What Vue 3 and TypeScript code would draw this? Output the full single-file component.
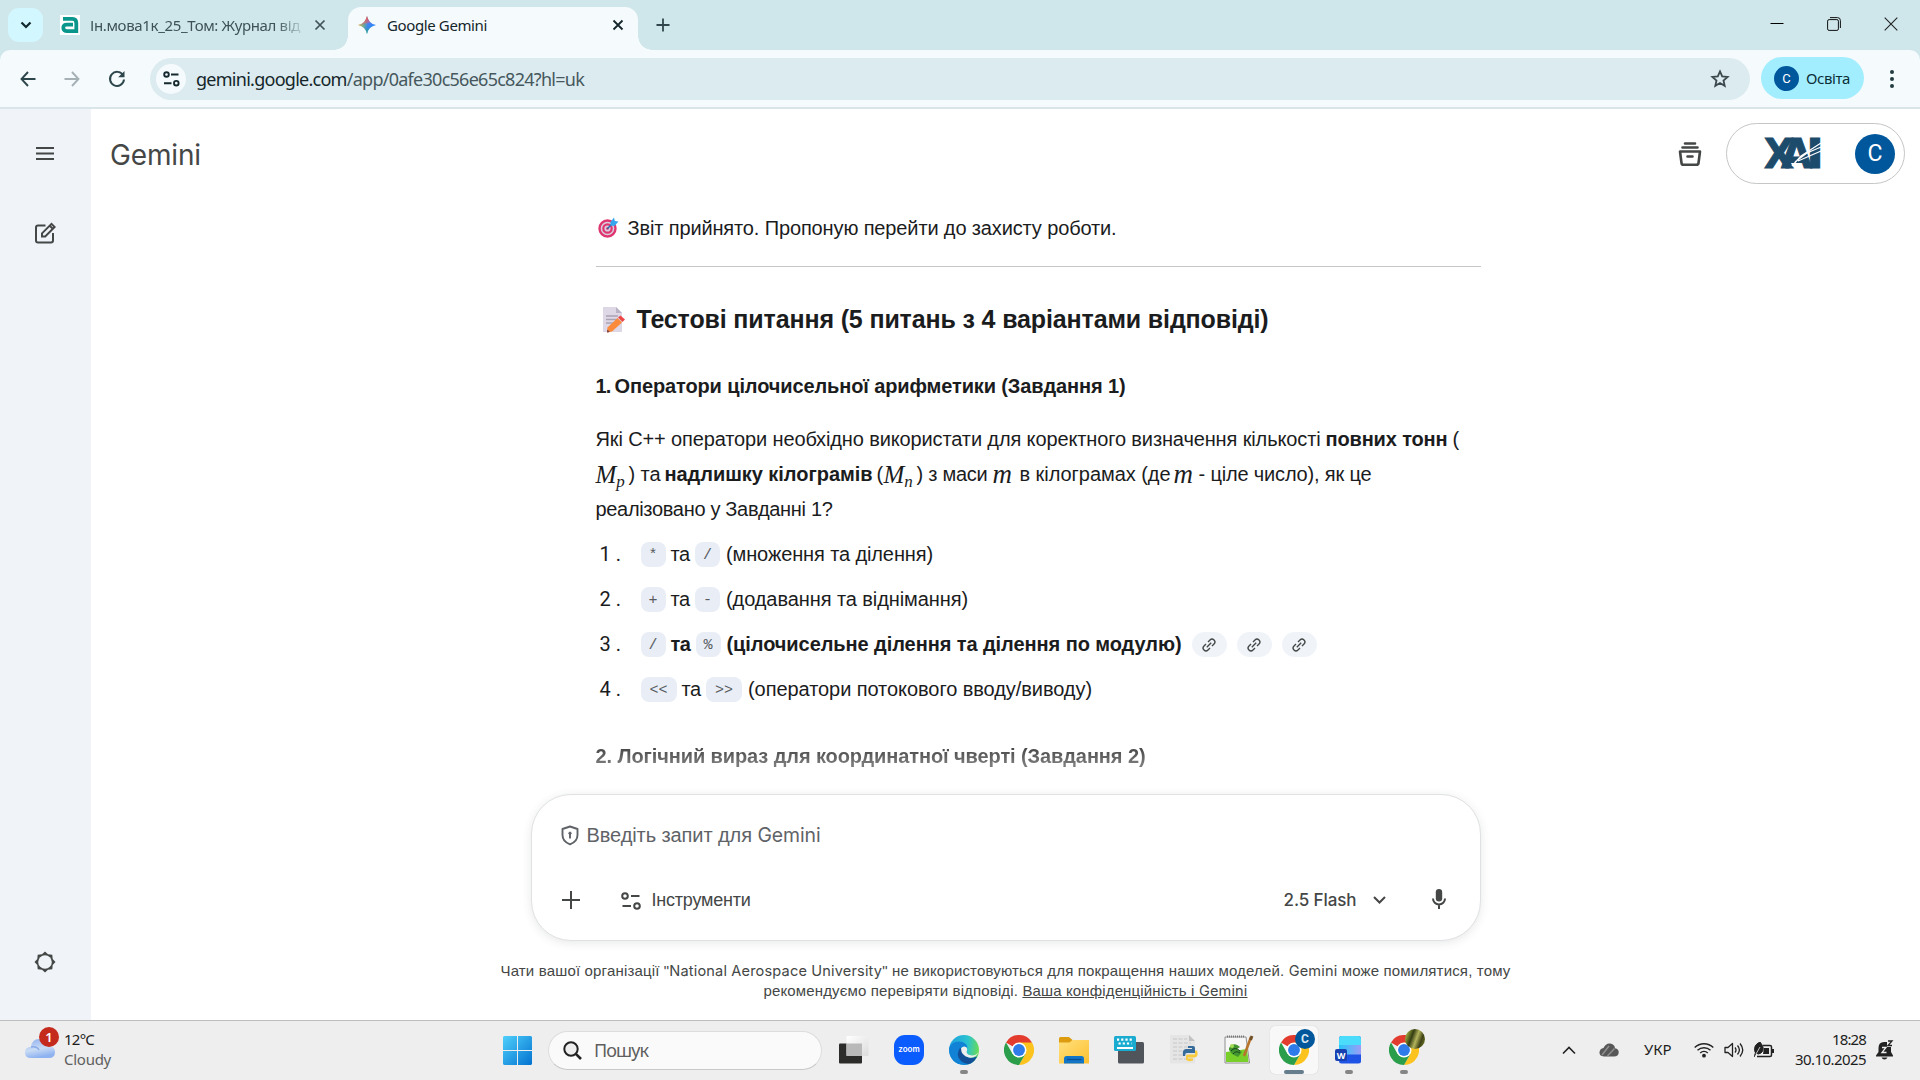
<script setup lang="ts">
import type { Directive } from 'vue'

interface Segment {
  text: string
  slot: number
  fit?: number
  kind?: 'bold' | 'math' | 'math single'
  sub?: string
}

interface Answer {
  first: string
  second: string
  wide?: boolean
  bold?: boolean
  text: string
  fit: number
  links: number
}

// Spreads a text run over the given width by adjusting its letter spacing.
const vFit: Directive<HTMLElement, number | undefined> = {
  mounted(el, { value }) {
    if (!value) return
    const count = (el.textContent ?? '').trim().length
    const natural = el.getBoundingClientRect().width
    el.style.letterSpacing = `${(value - natural) / count}px`
  },
}

const paragraph: Segment[][] = [
  [
    { text: 'Які C++ оператори необхідно використати для коректного визначення кількості', slot: 730, fit: 725 },
    { text: 'повних тонн', slot: 127, fit: 122, kind: 'bold' },
    { text: '(', slot: 10 },
  ],
  [
    { text: 'M', sub: 'p', slot: 33, kind: 'math' },
    { text: ') та', slot: 36, fit: 32 },
    { text: 'надлишку кілограмів', slot: 212, fit: 208, kind: 'bold' },
    { text: '(', slot: 7 },
    { text: 'M', sub: 'n', slot: 33, kind: 'math' },
    { text: ') з маси', slot: 76, fit: 71 },
    { text: 'm', slot: 27, kind: 'math single' },
    { text: 'в кілограмах (де', slot: 154, fit: 151 },
    { text: 'm', slot: 25, kind: 'math single' },
    { text: '- ціле число), як це', slot: 175, fit: 173 },
  ],
  [{ text: 'реалізовано у Завданні 1?', slot: 240, fit: 237 }],
]

const answers: Answer[] = [
  { first: '*', second: '/', text: '(множення та ділення)', fit: 207, links: 0 },
  { first: '+', second: '-', text: '(додавання та віднімання)', fit: 242, links: 0 },
  { first: '/', second: '%', bold: true, text: '(цілочисельне ділення та ділення по модулю)', fit: 455, links: 3 },
  { first: '<<', second: '>>', wide: true, text: '(оператори потокового вводу/виводу)', fit: 344, links: 0 },
]
</script>

<template>
  <div class="screen">
    <header class="tabs">
      <button class="tab-search">
        <svg width="12" height="8" viewBox="0 0 12 8"><path d="M1.5 1.5 6 6l4.500-4.500" fill="none" stroke="#10272c" stroke-width="2.200" /></svg>
      </button>
      <div class="tab idle">
        <svg class="fav" width="20" height="20" viewBox="0 0 20 20"><rect width="20" height="20" fill="#fff" /><path d="M3 3.800H12.500Q16.300 3.800 16.300 8V16.200H7.300Q3.300 16.200 3.300 12.800T7.300 9.600H13" fill="none" stroke="#0b968b" stroke-width="3.800" /></svg>
        <div class="tab-title faded"><span v-fit="210">Ін.мова1к_25_Том: Журнал від</span></div>
        <svg class="x" width="12" height="12" viewBox="0 0 12 12"><path d="M1.500 1.500l9 9m0-9l-9 9" stroke="#3e5257" stroke-width="1.700" /></svg>
      </div>
      <div class="tab active">
        <svg width="18" height="18" viewBox="0 0 18 18">
          <defs><linearGradient id="g1" x1="0" y1=".4" x2="1" y2=".6"><stop offset="0" stop-color="#f9c51a" /><stop offset=".38" stop-color="#5fa59f" /><stop offset=".55" stop-color="#3b82f6" /><stop offset="1" stop-color="#3186ff" /></linearGradient>
            <linearGradient id="g2" x1=".4" y1="0" x2=".6" y2="1"><stop offset="0" stop-color="#f43e44" /><stop offset=".36" stop-color="#ef5c70" stop-opacity=".6" /><stop offset=".5" stop-color="#4387f6" stop-opacity="0" /><stop offset=".75" stop-color="#24a96a" stop-opacity=".4" /><stop offset="1" stop-color="#0ebc5f" /></linearGradient></defs>
          <path d="M9 0Q10.500 7.500 18 9 10.500 10.500 9 18 7.500 10.500 0 9 7.500 7.500 9 0Z" fill="url(#g1)" />
          <path d="M9 0Q10.500 7.500 18 9 10.500 10.500 9 18 7.500 10.500 0 9 7.500 7.500 9 0Z" fill="url(#g2)" />
        </svg>
        <div class="tab-title"><span v-fit="100">Google Gemini</span></div>
        <svg class="x" width="12" height="12" viewBox="0 0 12 12"><path d="M1.500 1.500l9 9m0-9l-9 9" stroke="#14262a" stroke-width="1.800" /></svg>
      </div>
      <svg class="new-tab" width="14" height="14" viewBox="0 0 14 14"><path d="M7 .500v13M.500 7h13" stroke="#31474d" stroke-width="1.800" /></svg>
      <div class="window-controls">
        <svg width="14" height="14" viewBox="0 0 14 14"><path d="M.500 6.500h13" stroke="#000" /></svg>
        <svg width="14" height="14" viewBox="0 0 14 14" fill="none" stroke="#111"><rect x=".6" y="2.600" width="10.800" height="10.800" rx="1.500" /><path d="M3 .600h7.500q2.900 0 2.900 2.900V11" /></svg>
        <svg width="14" height="14" viewBox="0 0 14 14"><path d="M.700.700l12.600 12.600m0-12.600L.700 13.300" stroke="#222" stroke-width="1.100" /></svg>
      </div>
    </header>

    <div class="toolbar-back">
      <nav class="toolbar">
        <svg class="nav-icon" width="16" height="16" viewBox="0 0 16 16"><path d="M8 1 1.500 8 8 15M1.500 8H15.500" fill="none" stroke="#2d464c" stroke-width="1.900" /></svg>
        <svg class="nav-icon fwd" width="16" height="16" viewBox="0 0 16 16"><path d="M8 1 14.500 8 8 15M14.500 8H.500" fill="none" stroke="#a5b1b5" stroke-width="1.900" /></svg>
        <svg class="nav-icon rel" width="18" height="18" viewBox="0 0 18 18"><path d="M15 5.200A7 7 0 1 0 16 9.500" fill="none" stroke="#2d464c" stroke-width="2" /><path d="M16.500 1v6.300h-6.300z" fill="#2d464c" /></svg>
        <div class="omnibox">
          <span class="site">
            <svg width="17" height="16" viewBox="0 0 17 16" fill="none" stroke="#15292e" stroke-width="1.900"><circle cx="3.500" cy="3.500" r="2.300" /><circle cx="13.300" cy="12.200" r="2.300" /><path d="M8 3.500h7.500M1 12.200h7.500" /></svg>
          </span>
          <div class="url"><span v-fit="388">gemini.google.com<span class="path">/app/0afe30c56e65c824?hl=uk</span></span></div>
          <svg class="star" width="20" height="20" viewBox="0 0 20 20"><path d="M10 2.400l2.200 5 5.400.5-4.100 3.600 1.200 5.300L10 14l-4.700 2.800 1.200-5.300-4.100-3.600 5.400-.5z" fill="none" stroke="#3c494d" stroke-width="1.800" /></svg>
        </div>
        <div class="profile"><span class="mini-avatar">C</span><span v-fit="44">Освіта</span></div>
        <svg class="dots" width="4" height="18" viewBox="0 0 4 18" fill="#243b40"><circle cx="2" cy="2" r="2" /><circle cx="2" cy="9" r="2" /><circle cx="2" cy="16" r="2" /></svg>
      </nav>
    </div>

    <div class="body">
      <aside class="side">
        <svg width="18" height="14" viewBox="0 0 18 14"><path d="M0 1h18M0 6.500h18M0 12h18" stroke="#444746" stroke-width="2" /></svg>
        <svg class="edit" width="22" height="22" viewBox="0 0 22 22" fill="none" stroke="#444746" stroke-width="2"><path d="M11.500 3.500H4Q2 3.500 2 5.500V18.500Q2 20.500 4 20.500H17Q19 20.500 19 18.500V11" /><path d="M8 14.500V11.300L17.500 1.800 20.700 5 11.200 14.500Z" /><path d="M15.500 3.500 19 7" /></svg>
        <svg class="gear" width="22" height="22" viewBox="0 0 22 22"><path d="M11 .500 14 3.300 18.300 3.700 18.700 8 21.500 11 18.700 14 18.300 18.300 14 18.700 11 21.500 8 18.700 3.700 18.300 3.300 14 .500 11 3.300 8 3.700 3.700 8 3.300Z" fill="#444746" /><circle cx="11" cy="11" r="6.800" fill="#f0f4f9" /></svg>
      </aside>

      <main class="main">
        <div class="topbar">
          <div class="brand"><span v-fit="91">Gemini</span></div>
          <svg class="archive" width="24" height="24" viewBox="0 0 24 24" fill="none" stroke="#444746" stroke-width="2.600" stroke-linecap="round" stroke-linejoin="round"><path d="M7 1.500h10M4.500 5.500h15M2 9.500h20L20.500 21Q20.300 22.700 18.500 22.700H5.500Q3.700 22.700 3.500 21ZM9.500 14.500h5" /></svg>
          <div class="account">
            <svg class="uni" width="56" height="30" viewBox="0 0 56 30">
              <g font-family="DejaVu Sans" font-weight="700" font-size="41" fill="#1d4b6b" stroke="#1d4b6b">
                <text x="-1" y="30" textLength="30" lengthAdjust="spacingAndGlyphs">Х</text>
                <text x="16" y="30" textLength="31" lengthAdjust="spacingAndGlyphs">А</text>
                <text x="41" y="30" textLength="18" lengthAdjust="spacingAndGlyphs">І</text>
              </g>
              <path d="M27 28 36 18 56 5M30 24 42 15 56 9M33 23 56 13" fill="none" stroke="#fff" stroke-width="1.200" />
            </svg>
            <span class="avatar">C</span>
          </div>
        </div>

        <div class="chat">
          <article class="reply">
            <div class="line">
              <svg class="target" width="21" height="21" viewBox="0 0 21 21" fill="none"><circle cx="9.500" cy="11.500" r="8" fill="#d9cfe0" stroke="#e0366f" stroke-width="2.400" /><circle cx="9.500" cy="11.500" r="4.200" stroke="#e0366f" stroke-width="2.200" /><circle cx="9.500" cy="11.500" r="1.300" fill="#c92f66" /><path d="M9.500 11.500 14 7" stroke="#236fb5" stroke-width="1.400" /><path d="M12.500 5 16 .500 16.800 4 20.500 4.500 16.500 9 12.500 8.500Z" fill="#35a5ee" /></svg>
              <span v-fit="489">Звіт прийнято. Пропоную перейти до захисту роботи.</span>
            </div>
            <div class="rule"></div>
            <h2>
              <svg class="memo" width="24" height="26" viewBox="0 0 24 26"><path d="M1 0H14L20 6V25H1Z" fill="#ddd7e6" /><path d="M14 0V6H20Z" fill="#b9b1c4" /><path d="M4 9h12M4 12.500h11M4 16h8" stroke="#aaa3b3" stroke-width="1.300" /><path d="M5.500 20.500 15.500 11 20 15.500 10 24.500 5 25.500Z" fill="#fb8b3a" /><path d="M16 10.500 18.500 8.500 23 12.500 20.500 15Z" fill="#ec4848" /><path d="M5 25.500l.4-3 2.500 2.400z" fill="#73404a" /></svg>
              <span v-fit="632">Тестові питання (5 питань з 4 варіантами відповіді)</span>
            </h2>
            <h3 class="first"><span v-fit="15">1.</span><span v-fit="511">Оператори цілочисельної арифметики (Завдання 1)</span></h3>
            <div class="para">
              <div v-for="(row, i) in paragraph" :key="i" class="line">
                <span v-for="(seg, j) in row" :key="j" class="slot" :class="seg.kind" :style="{ width: seg.slot + 'px' }"><span v-fit="seg.fit">{{ seg.text }}<sub v-if="seg.sub">{{ seg.sub }}</sub></span></span>
              </div>
            </div>
            <ol>
              <li v-for="(a, i) in answers" :key="i" :class="{ wide: a.wide, strong: a.bold }">
                <span class="marker">{{ i + 1 }}.</span>
                <code>{{ a.first }}</code>
                <span class="and"><span v-fit="a.bold ? 20 : 19">та</span></span>
                <code>{{ a.second }}</code>
                <span v-fit="a.fit" class="answer">{{ a.text }}</span>
                <span v-for="n in a.links" :key="n" class="link">
                  <svg width="14" height="14" viewBox="0 0 14 14" fill="none" stroke="#444746" stroke-width="1.400"><path d="M6 4 8 2a2.700 2.700 0 0 1 4 4L10 8M4 6 2 8a2.700 2.700 0 0 0 4 4L8 10M4.800 9.200 9.200 4.800" /></svg>
                </span>
              </li>
            </ol>
            <h3 class="fading"><span v-fit="550">2. Логічний вираз для координатної чверті (Завдання 2)</span></h3>
          </article>

          <section class="prompt">
            <div class="prompt-top">
              <svg width="18" height="21" viewBox="0 0 18 21" fill="none" stroke="#5f6368" stroke-width="1.900"><path d="M9 1.500 16.500 4V10Q16.500 16.500 9 19.300 1.500 16.500 1.500 10V4Z" stroke-linejoin="round" /><circle cx="9" cy="8.300" r="1.200" fill="#5f6368" stroke-width="1" /><path d="M9 8.500v5" /></svg>
              <span v-fit="234">Введіть запит для <b class="latin">Gemini</b></span>
            </div>
            <div class="prompt-bottom">
              <svg width="18" height="18" viewBox="0 0 18 18"><path d="M9 0v18M0 9h18" stroke="#444746" stroke-width="2" /></svg>
              <svg class="tools" width="20" height="18" viewBox="0 0 20 18" fill="none" stroke="#444746" stroke-width="2"><circle cx="4" cy="4" r="2.800" /><circle cx="16" cy="14" r="2.800" /><path d="M10 4h8.500M1.500 14H10" /></svg>
              <span v-fit="99" class="tools-label">Інструменти</span>
              <span class="model"><span v-fit="73">2.5 Flash</span></span>
              <svg class="chev" width="13" height="8" viewBox="0 0 13 8"><path d="M1 1l5.500 5.500L12 1" fill="none" stroke="#444746" stroke-width="2" /></svg>
              <svg class="mic" width="14" height="20" viewBox="0 0 14 20"><rect x="3.800" y="0" width="6.400" height="12.500" rx="3.200" fill="#444746" /><path d="M1 9.500a6 6 0 0 0 12 0M7 15.500V20" fill="none" stroke="#444746" stroke-width="2" /></svg>
            </div>
          </section>

          <footer class="note">
            <div><span v-fit="1010">Чати вашої організації "<b class="latin">National Aerospace University</b>" не використовуються для покращення наших моделей. <b class="latin">Gemini</b> може помилятися, тому</span></div>
            <div><span v-fit="484">рекомендуємо перевіряти відповіді. <u>Ваша конфіденційність і <b class="latin">Gemini</b></u></span></div>
          </footer>
        </div>
      </main>
    </div>

    <footer class="taskbar">
      <div class="weather">
        <div class="cloud">
          <svg width="32" height="24" viewBox="0 0 32 24"><defs><linearGradient id="cl" x1="0" y1="0" x2=".3" y2="1"><stop offset="0" stop-color="#8fb0ee" /><stop offset=".6" stop-color="#c9dcf5" /><stop offset="1" stop-color="#8fb2f0" /></linearGradient></defs><path d="M7 23Q1 23 1 17.500T7 12Q8 4 15 4T24 11Q31 11 31 17T25 23Z" fill="url(#cl)" /><path d="M7 12Q13 11 15 15" fill="none" stroke="#8aaae8" stroke-width="1.500" /></svg>
          <span class="badge">1</span>
        </div>
        <div class="weather-text"><span v-fit="30">12°C</span><span v-fit="47" class="sub">Cloudy</span></div>
      </div>

      <svg class="start" width="29" height="29" viewBox="0 0 29 29"><defs><linearGradient id="win" x1="0" y1="0" x2="1" y2="1"><stop offset="0" stop-color="#4fd0fb" /><stop offset="1" stop-color="#0372d0" /></linearGradient></defs><path d="M1 0H14V14H0V1ZM15 0H28L29 1V14H15ZM0 15H14V29H1L0 28ZM15 15H29V28L28 29H15Z" fill="url(#win)" /></svg>
      <div class="search">
        <svg width="19" height="19" viewBox="0 0 19 19" fill="none" stroke="#222"><circle cx="8" cy="8" r="6.700" stroke-width="2" fill="#eee" /><path d="M12.800 12.800 18 18" stroke-width="2.600" /></svg>
        <span v-fit="54">Пошук</span>
      </div>

      <div class="apps">
        <span class="app"><svg width="30" height="30" viewBox="0 0 30 30"><defs><linearGradient id="tv" x1="0" y1="0" x2="1" y2="1"><stop offset="0" stop-color="#fff" /><stop offset="1" stop-color="#dcdcdc" /></linearGradient></defs><rect y="8.500" width="23" height="20" rx="1" fill="#2c2c2a" /><rect x="7.500" y="1" width="22" height="20" rx="1" fill="url(#tv)" /><path d="M7.500 8.500H23V21H7.500Z" fill="#b9b9b9" /></svg></span>
        <span class="app"><svg width="30" height="30" viewBox="0 0 30 30"><rect width="30" height="30" rx="11" fill="#0b5cff" /><text x="15" y="17.300" text-anchor="middle" font-family="Inter" font-weight="600" font-size="8" fill="#fff">zoom</text></svg></span>
        <span class="app run"><svg width="30" height="30" viewBox="0 0 30 30"><defs><linearGradient id="e1" x1="0" y1=".4" x2="1" y2=".5"><stop offset="0" stop-color="#1d9fe0" /><stop offset=".6" stop-color="#2bc3cf" /><stop offset="1" stop-color="#6bdc54" /></linearGradient></defs><circle cx="15" cy="15" r="15" fill="url(#e1)" /><path d="M0 14Q2 6.500 10 6.500 18 7 18.500 13 14 10 11 14 9.500 23 18 24 23 24.500 28 21.500 24 30 15 30 1 29 0 14Z" fill="#1182d6" /><path d="M11 13Q6 20 12 26 17 30 21.500 28.500 26 26 28 21.500 22 24 17 21.500 12.500 19 13.500 14Z" fill="#134f96" /><path d="M12 13.500Q14 10.500 17 12 19 14 17.500 17 18 20 23 20.500 27 20.500 29.500 17 27 23.500 20 22.500 12 20.500 12 13.500Z" fill="#eee" /></svg></span>
        <span class="app"><svg width="30" height="30" viewBox="0 0 48 48"><path d="M24 24 3.200 12A24 24 0 0 1 44.800 12Z" fill="#e33b2e" /><path d="M24 12H44.800A24 24 0 0 1 24 48L34.400 30Z" fill="#fcc31e" /><path d="M3.200 12 13.600 30 24 36 24 48A24 24 0 0 1 3.200 12ZM34.400 30 24 48 18 32Z" fill="#2a9e4b" /><circle cx="24" cy="24" r="12" fill="#fff" /><circle cx="24" cy="24" r="9.500" fill="#2f7bea" /></svg></span>
        <span class="app"><svg width="30" height="30" viewBox="0 0 30 30"><defs><linearGradient id="fo" x1="0" y1="0" x2="1" y2="1"><stop offset="0" stop-color="#ffe07d" /><stop offset="1" stop-color="#fdc02f" /></linearGradient></defs><path d="M0 3.500Q0 2 1.500 2H10L13.500 5V10H0Z" fill="#dd9c10" /><path d="M0 7.500H10.500L13.500 5H30V28.500H0Z" fill="url(#fo)" /><path d="M5 28.500V23.500Q5 21 7.500 21H22.500Q25 21 25 23.500V28.500Z" fill="#1375c8" /><path d="M8 24.500H22.500" stroke="#0a4f94" stroke-width="1.300" /></svg></span>
        <span class="app"><svg width="30" height="30" viewBox="0 0 30 30"><rect x="4" y="7" width="26" height="21.500" rx="1.500" fill="#50555b" /><rect y="1" width="22" height="15" rx="1.500" fill="#1aacd0" /><path d="M3 4.700h16M4.500 8.500h13" stroke="#fff" stroke-width="2.200" stroke-dasharray="2.200 2" /><path d="M3 13h16" stroke="#fff" stroke-width="2" /></svg></span>
        <span class="app"><svg width="30" height="30" viewBox="0 0 30 30"><path d="M1 0H20L26 6V28.500H1Z" fill="#e5e5e5" /><path d="M20 0V6H26Z" fill="#c2c2c2" /><path d="M4 4h14M4 8h18M4 12h18M4 16h18M4 20h18M4 24h18" stroke="#c7c7c7" stroke-dasharray="4 1.500" /><path d="M19 11h5q2 0 2 2v5h-8q-2 0-2 3h-2q-1-7 3-7h6v-1h-4z" fill="#366c9c" /><path d="M26 15.500h2q2 7-3 7h-6v1h5v2q-5 2-7-1v-3q0-2 3-2h6z" fill="#f8cc3c" /></svg></span>
        <span class="app"><svg width="30" height="30" viewBox="0 0 30 30"><path d="M1 2H22L25.500 28H1Z" fill="#f7f7f7" stroke="#777" stroke-width=".8" /><path d="M2 17 23 14 24.500 27H2Z" fill="#78cf2a" /><path d="M5 13Q10 6 16 12L13 14 18 17 14 22 8 19 5 15Z" fill="#42952e" /><circle cx="8" cy="11" r="2" fill="#a4dd55" /><path d="M7 16q4-5 9 0m-7 3q3-4 7-1" stroke="#16451c" fill="none" /><path d="M3 1.500h18" stroke="#777" stroke-width="2" stroke-dasharray="1 1" /><path d="M27 2 20 21" stroke="#b8732d" stroke-width="2.600" /><path d="M28 1l-1.500 4" stroke="#725126" stroke-width="3" /></svg></span>
        <span class="app run current"><svg width="30" height="30" viewBox="0 0 48 48"><path d="M24 24 3.200 12A24 24 0 0 1 44.800 12Z" fill="#e33b2e" /><path d="M24 12H44.800A24 24 0 0 1 24 48L34.400 30Z" fill="#fcc31e" /><path d="M3.200 12 13.600 30 24 36 24 48A24 24 0 0 1 3.200 12ZM34.400 30 24 48 18 32Z" fill="#2a9e4b" /><circle cx="24" cy="24" r="12" fill="#fff" /><circle cx="24" cy="24" r="9.500" fill="#2f7bea" /></svg><i class="user">C</i></span>
        <span class="app run"><svg width="30" height="30" viewBox="0 0 30 30"><defs><linearGradient id="wd" x1="0" y1="0" x2="1" y2="0"><stop offset="0" stop-color="#25c7fa" /><stop offset="1" stop-color="#9c9cf7" /></linearGradient></defs><rect x="5" y="1" width="22" height="27.500" rx="2.500" fill="#1f53e6" /><path d="M7.500 1H24.500Q27 1 27 3.500V10H5V3.500Q5 1 7.500 1Z" fill="#4cdcfb" /><rect x="5" y="10" width="22" height="9.500" fill="url(#wd)" /><rect x="1" y="14" width="12" height="12" rx="2" fill="#1740b0" /><text x="7" y="23.500" text-anchor="middle" font-family="Open Sans" font-weight="700" font-size="9" fill="#fff">W</text></svg></span>
        <span class="app run"><svg width="30" height="30" viewBox="0 0 48 48"><path d="M24 24 3.200 12A24 24 0 0 1 44.800 12Z" fill="#e33b2e" /><path d="M24 12H44.800A24 24 0 0 1 24 48L34.400 30Z" fill="#fcc31e" /><path d="M3.200 12 13.600 30 24 36 24 48A24 24 0 0 1 3.200 12ZM34.400 30 24 48 18 32Z" fill="#2a9e4b" /><circle cx="24" cy="24" r="12" fill="#fff" /><circle cx="24" cy="24" r="9.500" fill="#2f7bea" /></svg><i class="user photo"></i></span>
      </div>

      <div class="tray">
        <svg width="14" height="9" viewBox="0 0 14 9"><path d="M1 7.500 7 1.500l6 6" fill="none" stroke="#222" stroke-width="1.600" /></svg>
        <svg class="onedrive" width="20" height="14" viewBox="0 0 20 14"><path d="M5 13.500Q0 13 .500 9 1 5.500 4.500 5 7 0 11 .500 15.500 1 16 5.200 20 6 19.700 9.500 19.500 13.500 15 13.500Z" fill="#575757" /><path d="M3 12 10 3M8.500 13 15.500 5.500" stroke="#8d8d8d" stroke-width="1.600" /></svg>
        <span v-fit="26" class="lang">УКР</span>
        <svg class="wifi" width="20" height="16" viewBox="0 0 20 16" fill="none" stroke="#222" stroke-width="1.400"><path d="M.700 5.500a13.500 13.500 0 0 1 18.600 0M3.500 8.300a9.500 9.500 0 0 1 13 0M6.200 11a5.700 5.700 0 0 1 7.600 0" /><circle cx="10" cy="13.700" r="1.200" fill="#222" /></svg>
        <svg class="vol" width="20" height="16" viewBox="0 0 20 16" fill="none" stroke="#222" stroke-width="1.300"><path d="M1 5.500H4L8.500 1.500V14.500L4 10.500H1Z" stroke-linejoin="round" /><path d="M11 5.500q2 2.500 0 5M13.500 3.500q3.800 4.500 0 9M16 1.500q5.500 6.500 0 13" /></svg>
        <svg class="bat" width="20" height="16" viewBox="0 0 20 16"><path d="M9 3.500H16Q17.500 3.500 17.500 5V13Q17.500 14.500 16 14.500H3" fill="none" stroke="#222" stroke-width="1.500" /><path d="M10 6h5v6H9ZM18 7h2v4h-2z" fill="#222" /><path d="M1 10Q-1 3 6 0 12 7 7 11 4 13 2 11L0 15" fill="#222" stroke="#222" /><path d="M2 12 6 5" stroke="#eee" stroke-width=".8" /></svg>
        <div class="clock"><span v-fit="34">18:28</span><span v-fit="71">30.10.2025</span></div>
        <svg class="bell" width="18" height="20" viewBox="0 0 18 20"><path d="M2.500 8Q2.500 2 8 2H11V7H15V12L17 15.500V16.500H0V15.500L2.500 12ZM5.500 17.500h6q-1 2-3 2t-3-2Z" fill="#222" /><path d="M6 7.500h4L6 12.500h4.500" fill="none" stroke="#eee" stroke-width="1.300" /><path d="M12 1h4l-4 4.500h4" fill="none" stroke="#222" stroke-width="1.300" /></svg>
      </div>
    </footer>
  </div>
</template>

<style>
body { margin: 0; overflow: hidden; }
</style>

<style scoped>
.screen { width: 1920px; height: 1080px; display: flex; flex-direction: column; overflow: hidden; background: #fff; font-family: "Noto Sans", sans-serif; }
.screen * { box-sizing: border-box; }
svg { flex: none; display: block; }
span { white-space: nowrap; }
b.latin { font-family: Inter, sans-serif; font-weight: 400; font-size: .97em; }

.tabs { height: 50px; flex: none; display: flex; background: #cfe7eb; padding-left: 8px; }
.tab-search { width: 35px; height: 34px; margin-top: 8px; padding: 0; border: 0; border-radius: 11px; background: #d3f7ff; display: flex; align-items: center; justify-content: center; }
.tab { display: flex; align-items: center; font-size: 15px; color: #3e5257; }
.idle { width: 305px; padding-left: 17px; }
.tab-title { margin-left: 10px; line-height: 22px; }
.faded { width: 212px; -webkit-mask-image: linear-gradient(90deg, #000 88%, transparent 102%); mask-image: linear-gradient(90deg, #000 88%, transparent 102%); }
.idle .x { margin-left: 12px; }
.active { position: relative; width: 290px; height: 43px; margin-top: 7px; padding: 0 14px 7px 10px; border-radius: 13px 13px 0 0; background: #f5fafd; color: #14262a; }
.active .tab-title { margin-left: 11px; }
.active::before, .active::after { content: ""; position: absolute; bottom: 0; width: 14px; height: 14px; }
.active::before { left: -14px; background: radial-gradient(circle at 0 0, transparent 13.500px, #f5fafd 14px); }
.active::after { right: -14px; background: radial-gradient(circle at 100% 0, transparent 13.500px, #f5fafd 14px); }
.active .x { margin-left: auto; }
.new-tab { margin: 18px 0 0 18px; }
.window-controls { margin: 17px 22px 0 auto; display: flex; gap: 43px; }

.toolbar-back { height: 59px; flex: none; background: #cfe7eb; }
.toolbar { height: 59px; display: flex; align-items: center; padding: 0 26px 0 20px; background: #f5fafd; border-bottom: 2px solid #dae5e9; border-radius: 10px 10px 0 0; }
.fwd { margin-left: 28px; }
.rel { margin-left: 28px; }
.omnibox { width: 1600px; height: 42px; margin-left: 24px; padding: 0 20px 0 6px; display: flex; align-items: center; border-radius: 21px; background: #dcebef; }
.site { width: 30px; height: 30px; border-radius: 50%; background: #f5fafd; display: flex; align-items: center; justify-content: center; }
.url { margin-left: 10px; font-size: 18px; line-height: 26px; color: #14262a; }
.path { color: #46585d; }
.star { margin-left: auto; }
.profile { width: 103px; height: 42px; margin: -1px 0 0 11px; padding-left: 13px; display: flex; align-items: center; gap: 7px; border-radius: 21px; background: #a2eeff; font-size: 15px; color: #0c2f37; }
.mini-avatar { width: 25px; height: 25px; border-radius: 50%; background: #01579b; color: #fff; font: 13px/25px Roboto, sans-serif; text-align: center; }
.dots { margin-left: auto; }

.body { height: 911px; flex: none; display: flex; }
.side { width: 91px; background: #f0f4f9; display: flex; flex-direction: column; align-items: center; padding: 38px 1px 0 0; }
.edit { margin-top: 61px; }
.gear { margin-top: 707px; }
.main { width: 1829px; display: flex; flex-direction: column; align-items: center; }
.topbar { width: 100%; height: 90px; display: flex; align-items: center; padding: 0 15px 0 19px; }
.brand { padding-top: 2px; font: 400 28px/36px Inter, sans-serif; color: #444746; }
.archive { margin-left: auto; }
.account { width: 179px; height: 61px; margin: -1px 0 0 24px; padding: 0 9px 0 38px; display: flex; align-items: center; justify-content: space-between; border: 1px solid #c4c7c5; border-radius: 31px; }
.uni { overflow: visible; margin-top: -2px; }
.avatar { width: 40px; height: 40px; border-radius: 50%; background: #01579b; color: #fff; font: 23px/40px Roboto, sans-serif; text-align: center; }

.chat { width: 950px; }
.reply { padding: 12px 0 0 65px; font: 20px/35px "Liberation Sans", Arial, sans-serif; color: #1b1c1d; }
.line { display: flex; height: 35px; }
.target { margin: 6px 9px 0 2px; }
.rule { height: 1px; margin-top: 20px; background: #c4c7c5; }
h2 { display: flex; margin: 32px 0 0; font-size: 25px; line-height: 40px; }
.memo { margin: 8px 11px 0 6px; }
h3 { height: 35px; margin: 30px 0 0; font-size: 20px; line-height: 35px; }
.first { display: flex; gap: 4px; }
.para { margin-top: 18px; }
.slot { flex: none; }
.bold { font-weight: 700; }
.math { font-family: "Liberation Serif", serif; font-style: italic; font-size: 25px; }
.single { font-size: 27px; }
sub { font-size: 17px; line-height: 0; vertical-align: -4px; }
ol { margin: 10px 0 0; padding: 0; display: flex; flex-direction: column; gap: 10px; list-style: none; }
li { height: 35px; display: flex; align-items: center; }
.marker { width: 45px; padding-left: 4px; font-family: Roboto, sans-serif; letter-spacing: 5px; }
.strong { font-weight: 700; }
.strong .marker { font-weight: 400; }
code { flex: none; width: 25px; height: 25px; border-radius: 8px; background: #e9eef6; color: #575b5f; font: 400 15px/28px "Liberation Mono", monospace; text-align: center; }
.wide code { width: 36px; }
.and { width: 29.500px; padding-left: 5px; }
.strong .and { width: 30px; }
.answer { margin-left: 6px; }
.link { width: 35px; height: 25px; margin-left: 10px; border-radius: 13px; background: #f0f4f9; display: flex; align-items: center; justify-content: center; }
.fading { margin-top: 32px; }
.fading span { background: linear-gradient(#4a4a4a 20%, #7a7a7a 85%); -webkit-background-clip: text; background-clip: text; color: transparent; }

.prompt { height: 147px; margin-top: 20px; padding: 0 27px 0 29px; border: 1px solid #dfe1e3; border-radius: 40px; background: #fff; box-shadow: 0 2px 10px rgba(60, 64, 67, .12); font: 20px/28px "Liberation Sans", Arial, sans-serif; color: #5f6368; }
.prompt-top { display: flex; align-items: center; gap: 8px; height: 28px; margin-top: 26px; }
.prompt-bottom { display: flex; align-items: center; height: 30px; margin-top: 36px; padding-left: 1px; color: #444746; font-size: 18px; }
.tools { margin-left: 41px; margin-top: 1px; }
.tools-label { margin-left: 11px; }
.model { margin-left: auto; padding-bottom: 1px; font: 500 17px/28px Inter, sans-serif; }
.chev { margin: -1px 0 0 16px; }
.mic { margin: -2px 7px 0 46px; }
.note { margin: 20px -60px 0; font: 15px/20px "Liberation Sans", Arial, sans-serif; color: #444746; text-align: center; }

.taskbar { position: relative; height: 60px; flex: none; display: flex; align-items: center; padding-bottom: 1px; background: #eee; border-top: 1px solid #bdbdbd; color: #1d1d1d; }
.weather { width: 503px; display: flex; padding-left: 24px; }
.cloud { position: relative; width: 40px; height: 40px; padding-top: 5px; }
.badge { position: absolute; left: 15px; top: -3px; width: 20px; height: 20px; border-radius: 50%; background: #c42b1c; color: #fff; font-size: 13px; font-weight: 600; line-height: 20px; text-align: center; }
.weather-text { display: flex; flex-direction: column; align-items: flex-start; font-size: 15px; line-height: 20px; margin-top: -1px; }
.sub { color: #606060; }
.search { width: 274px; height: 39px; margin-left: 16px; padding-left: 14px; display: flex; align-items: center; gap: 12px; border: 1px solid #ddd; border-bottom-color: #c8c8c8; border-radius: 20px; background: #fafafa; font-size: 18px; color: #5f5f5f; }
.apps { display: flex; gap: 7px; margin-left: 8px; }
.app { position: relative; width: 48px; height: 48px; display: flex; align-items: center; justify-content: center; border-radius: 5px; }
.app.run::after { content: ""; position: absolute; bottom: 0; left: 20px; width: 8px; height: 4px; border-radius: 2px; background: #858585; }
.app.current { background: #f8f8f8; box-shadow: 0 0 1px #bbb; }
.app.current::after { left: 14px; width: 20px; background: #657d8c; }
.user { position: absolute; right: 3px; top: 3px; width: 20px; height: 20px; border-radius: 50%; background: #01579b; color: #d7e5f0; font: 700 12px/20px Roboto, sans-serif; text-align: center; }
.photo { background: linear-gradient(110deg, #8d9c38 15%, #343d12 35%, #b3b45b 55%, #3e4215 75%, #848931); }
.tray { display: flex; align-items: center; margin-left: auto; padding-right: 26px; font-size: 15px; }
.onedrive { margin-left: 23px; }
.lang { margin: -2px 0 0 25px; width: 26px; }
.wifi { margin-left: 24px; }
.vol, .bat { margin-left: 10px; }
.clock { width: 92px; margin-top: -2px; display: flex; flex-direction: column; align-items: flex-end; line-height: 20px; }
.bell { margin-left: 10px; }
</style>
